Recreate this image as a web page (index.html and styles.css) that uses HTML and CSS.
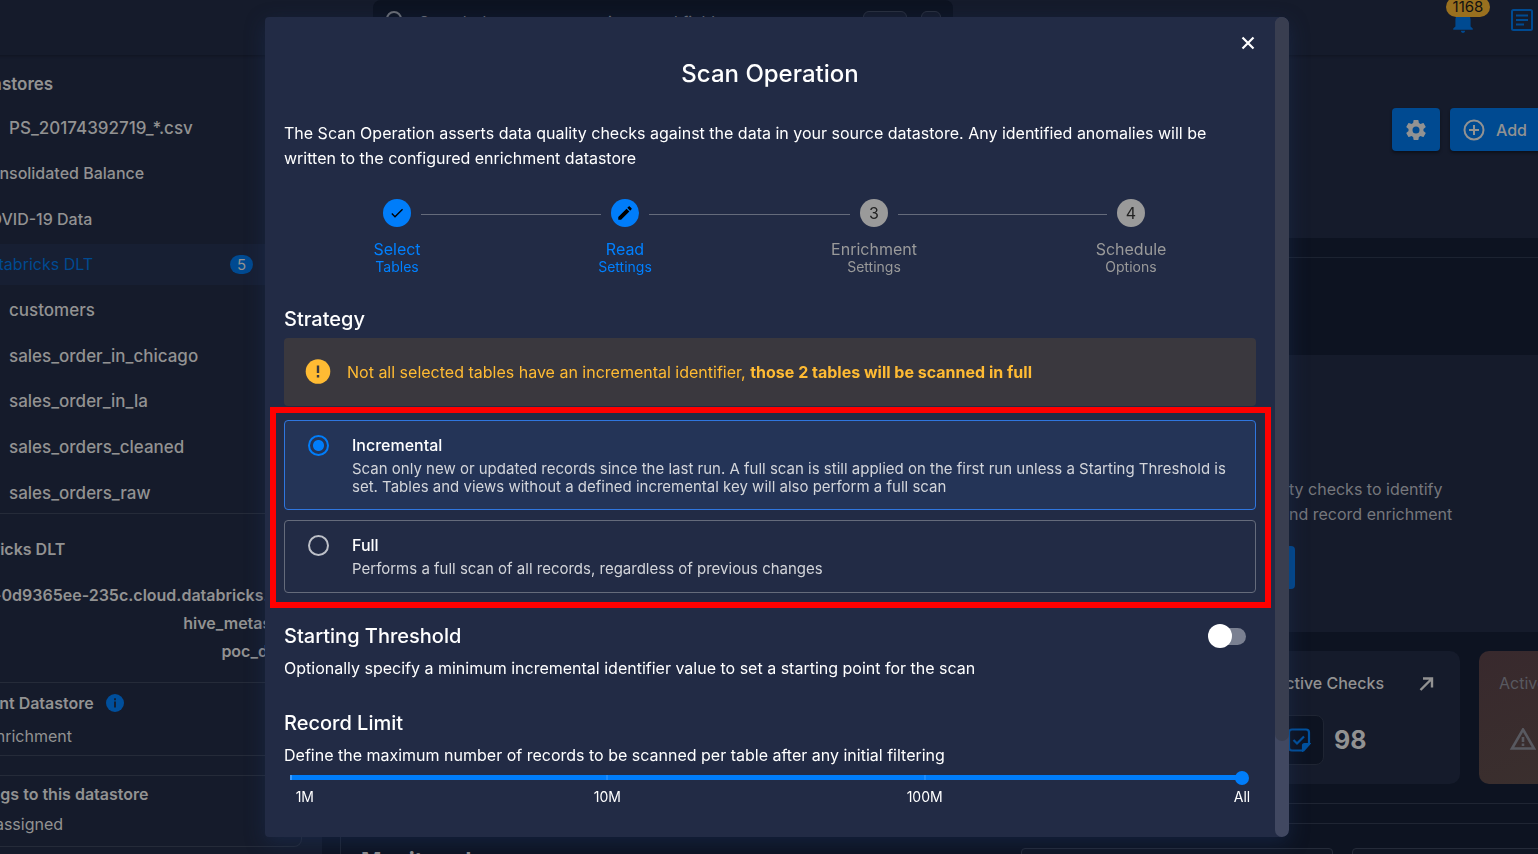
FILE: index.html
```html
<!DOCTYPE html>
<html lang="en">
<head>
<meta charset="utf-8">
<title>Scan Operation</title>
<link rel="stylesheet" href="styles.css">
</head>
<body>
<div class="shell">
  <header class="topbar">
    <div class="search">
      <svg class="search-icon" width="24" height="24" viewBox="0 0 24 24"><circle cx="9" cy="9" r="7" /><path d="M14 14l6 6" /></svg>
      <span class="search-text">Search datastores, containers and fields</span>
      <kbd class="key key-wide"></kbd><kbd class="key"></kbd>
    </div>
    <div class="top-actions">
      <button class="icon-button bell" aria-label="Notifications">
        <svg width="26" height="26" viewBox="0 0 24 24"><path d="M21 19v1H3v-1l2-2v-6c0-3.100 2.030-5.830 5-6.710V4a2 2 0 0 1 4 0v.29c2.970.88 5 3.610 5 6.710v6l2 2M14 21a2 2 0 0 1-4 0" fill="#004a91"/></svg>
        <span class="badge">1168</span>
      </button>
      <button class="icon-button" aria-label="Notes">
        <svg width="24" height="24" viewBox="0 0 24 24" fill="none" stroke="#004a91" stroke-width="2"><rect x="2" y="2" width="20" height="20" rx="1.500"/><path d="M6 7.500h12M6 12h12M6 16.500h8"/></svg>
      </button>
    </div>
  </header>
  <div class="columns">
    <aside class="sidebar">
      <h2 class="side-heading">Datastores</h2>
      <ul class="tree">
        <li class="child">PS_20174392719_*.csv</li>
        <li>Consolidated Balance</li>
        <li>COVID-19 Data</li>
        <li class="selected">Databricks DLT <span class="count">5</span></li>
        <li class="child">customers</li>
        <li class="child">sales_order_in_chicago</li>
        <li class="child">sales_order_in_la</li>
        <li class="child">sales_orders_cleaned</li>
        <li class="child">sales_orders_raw</li>
      </ul>
      <section class="connection">
        <h3>Databricks DLT</h3>
        <p>dbc-0d9365ee-235c.cloud.databricks.com</p>
        <p>hive_metastore</p>
        <p>poc_datab</p>
      </section>
      <section class="enrichment">
        <h3>Enrichment Datastore
          <svg width="18" height="18" viewBox="0 0 18 18"><circle cx="9" cy="9" r="9" fill="#004f9c"/><path d="M9 4.200v2M9 7.500v6" stroke="#151b2b" stroke-width="1.800"/></svg>
        </h3>
        <p>dlt_enrichment</p>
      </section>
      <section class="tags">
        <h3>Add tags to this datastore</h3>
        <p>None assigned</p>
      </section>
    </aside>
    <main class="main">
      <section class="hero">
        <button class="action" aria-label="Settings">
          <svg width="24" height="24" viewBox="0 0 24 24"><path d="M12 15.500A3.500 3.500 0 0 1 8.500 12 3.500 3.500 0 0 1 12 8.500a3.500 3.500 0 0 1 3.500 3.500 3.500 3.500 0 0 1-3.500 3.500m7.430-2.530c.04-.32.07-.64.07-.97s-.03-.66-.07-1l2.110-1.630c.19-.15.24-.42.12-.64l-2-3.460c-.12-.22-.39-.31-.61-.22l-2.490 1c-.52-.39-1.060-.73-1.690-.98l-.37-2.650A.506.506 0 0 0 14 2h-4c-.25 0-.46.18-.5.42l-.37 2.650c-.63.25-1.170.59-1.690.98l-2.490-1c-.22-.09-.49 0-.61.22l-2 3.460c-.13.22-.07.49.12.64L4.570 11c-.04.34-.07.67-.07 1s.03.65.07.97l-2.110 1.660c-.19.15-.25.42-.12.64l2 3.460c.12.22.39.3.61.22l2.490-1.010c.52.4 1.060.74 1.690.99l.37 2.650c.04.24.25.42.5.42h4c.25 0 .46-.18.5-.42l.37-2.650c.63-.26 1.170-.59 1.690-.99l2.490 1.010c.22.08.49 0 .61-.22l2-3.460c.12-.22.07-.49-.12-.64z" fill="#929292"/></svg>
        </button>
        <button class="action action-add">
          <svg width="24" height="24" viewBox="0 0 24 24" fill="none" stroke="#929292" stroke-width="2"><circle cx="12" cy="12" r="9.500"/><path d="M12 7v10M7 12h10"/></svg>
          Add
        </button>
      </section>
      <div class="divider-gap"></div>
      <section class="intro-panel">
        <p>ty checks to identify<br>nd record enrichment</p>
        <span class="hidden-button"></span>
      </section>
      <div class="stats">
        <article class="stat">
          <h3>Active Checks
            <svg width="16" height="16" viewBox="0 0 16 16" fill="none" stroke="#929292" stroke-width="2.400"><path d="M1.500 15L12.500 4M4 3.500H13V12.500"/></svg>
          </h3>
          <div class="stat-row">
            <span class="stat-icon"><svg width="24" height="24" viewBox="0 0 24 24" fill="none" stroke="#00529f" stroke-width="2.200"><path d="M5 1.500H19a3 3 0 0 1 3 3V16L16.500 22.500H5a3 3 0 0 1-3-3V4.500a3 3 0 0 1 3-3Z"/><path d="M6.500 12l3.500 3.500L17 8.500"/><path d="M16 22V17.500a1.500 1.500 0 0 1 1.500-1.500H22Z" fill="#00529f"/></svg></span>
            <b>98</b>
          </div>
        </article>
        <article class="stat stat-warm">
          <h3>Active Anomalies</h3>
          <div class="stat-row">
            <svg width="28" height="24" viewBox="0 0 28 24" fill="none" stroke="#585960" stroke-width="2.600"><path d="M14 1.500L25 20.500H3Z"/><path d="M14 9v5M14 15.500v2.500"/></svg>
          </div>
        </article>
      </div>
      <section class="monitored">
        <h2>Monitored</h2>
        <div class="box"></div><div class="box"></div>
      </section>
    </main>
  </div>
</div>

<div class="overlay">
  <div class="dialog" role="dialog" aria-labelledby="dialog-title">
    <form class="dialog-body">
      <button type="button" class="close" aria-label="Close"><svg width="14" height="14" viewBox="0 0 14 14"><path d="M1.500 1.500l11 11M12.500 1.500l-11 11" stroke="#fff" stroke-width="2.200"/></svg></button>
      <h1 id="dialog-title">Scan Operation</h1>
      <p class="lead">The Scan Operation asserts data quality checks against the data in your source datastore. Any identified anomalies will be written to the configured enrichment datastore</p>
      <ol class="stepper">
        <li class="step done"><span class="dot"><svg width="16" height="16" viewBox="0 0 24 24"><path d="M21 7L9 19l-5.500-5.500 1.410-1.410L9 16.170 19.590 5.590z" fill="#000"/></svg></span><span class="label">Select</span><small>Tables</small></li>
        <li class="rail" aria-hidden="true"></li>
        <li class="step done"><span class="dot"><svg width="18" height="18" viewBox="0 0 24 24"><path d="M20.710 7.040c.39-.39.39-1.040 0-1.410l-2.340-2.340c-.37-.39-1.020-.39-1.410 0l-1.840 1.830 3.750 3.750M3 17.250V21h3.750L17.810 9.930l-3.750-3.750z" fill="#000"/></svg></span><span class="label">Read</span><small>Settings</small></li>
        <li class="rail" aria-hidden="true"></li>
        <li class="step"><span class="dot">3</span><span class="label">Enrichment</span><small>Settings</small></li>
        <li class="rail" aria-hidden="true"></li>
        <li class="step"><span class="dot">4</span><span class="label">Schedule</span><small>Options</small></li>
      </ol>
      <h2>Strategy</h2>
      <div class="alert">
        <svg width="26" height="26" viewBox="0 0 26 26"><circle cx="13" cy="12.500" r="12.300" fill="#fb3"/><path d="M13 6.500v7.500M13 16v2.500" stroke="#3a383e" stroke-width="2.400"/></svg>
        <p>Not all selected tables have an incremental identifier, <b>those 2 tables will be scanned in full</b></p>
      </div>
      <div class="options">
        <div class="highlight"></div>
        <label class="option option-on">
          <input type="radio" name="strategy" checked>
          <span><strong>Incremental</strong><span class="desc">Scan only new or updated records since the last run. A full scan is still applied on the first run unless a Starting Threshold is set. Tables and views without a defined incremental key will also perform a full scan</span></span>
        </label>
        <label class="option">
          <input type="radio" name="strategy">
          <span><strong>Full</strong><span class="desc">Performs a full scan of all records, regardless of previous changes</span></span>
        </label>
      </div>
      <div class="threshold">
        <h2><label for="threshold">Starting Threshold</label></h2>
        <input id="threshold" class="switch" type="checkbox">
      </div>
      <p class="hint">Optionally specify a minimum incremental identifier value to set a starting point for the scan</p>
      <h2 class="limit-title"><label for="limit">Record Limit</label></h2>
      <p class="hint">Define the maximum number of records to be scanned per table after any initial filtering</p>
      <input id="limit" class="slider" type="range" min="0" max="3" value="3">
      <div class="ticks"><span>1M</span><span>10M</span><span>100M</span><span>All</span></div>
    </form>
    <div class="scrollbar"><div class="thumb"></div></div>
  </div>
</div>
</body>
</html>
```
FILE: styles.css
```css
* { box-sizing: border-box; }
body {
  margin: 0;
  background: #0d1321;
  color: #929292;
  font: 16px/24px Inter, "Liberation Sans", sans-serif;
}
h1, h2, h3, p, ul, ol { margin: 0; padding: 0; font-weight: 500; }
ul, ol { list-style: none; }
button { border: 0; padding: 0; background: none; font: inherit; color: inherit; }
svg { display: block; flex: none; }

/* Application behind the dialog */
.shell { display: flex; flex-direction: column; height: 100vh; margin-left: -64px; overflow: hidden; }
.topbar {
  position: relative;
  display: flex;
  flex: none;
  justify-content: space-between;
  height: 55px;
  padding-left: 437px;
  background: #151b2b;
  box-shadow: 0 1px 3px rgba(0, 0, 0, .25);
}
.search {
  display: flex;
  align-items: center;
  gap: 10px;
  width: 580px;
  height: 44px;
  padding: 0 12px;
  border-radius: 8px;
  background: #0d1321;
  color: #6b6e75;
}
.search-icon { fill: none; stroke: #6b6e75; stroke-width: 2; }
.search-text { flex: 1; }
.key { width: 20px; height: 22px; border: 1px solid #2a303e; border-radius: 6px; background: #151b2b; }
.key-wide { width: 44px; margin-right: 4px; }
.top-actions { display: flex; gap: 36px; padding: 8px 4px 0 0; height: 32px; }
.icon-button { position: relative; width: 24px; height: 24px; }
.badge {
  position: absolute;
  left: -4px;
  top: -11px;
  width: 44px;
  border-radius: 10px;
  background: #99701f;
  color: #111;
  font-size: 15px;
  line-height: 20px;
}
.columns { display: flex; flex: 1; min-height: 0; }
.sidebar { flex: none; width: 386px; overflow: hidden; background: #151b2b; font-weight: 600; }
.side-heading { padding: 17px 0 0 28px; font-size: 17px; font-weight: 600; }
.tree { display: flex; flex-direction: column; justify-content: space-between; height: 406px; margin-top: 11px; }
.tree li { display: flex; align-items: center; height: 41px; padding: 0 69px 0 42px; }
.tree .child { padding-left: 73px; font-size: 17px; }
.tree .selected { justify-content: space-between; background: #171f33; color: #004a91; font-weight: 400; }
.count {
  width: 23px;
  border-radius: 10px;
  background: #004a91;
  color: #929292;
  font-size: 15px;
  line-height: 19px;
  text-align: center;
}
.sidebar section { margin-right: 20px; border-top: 1px solid #252b39; }
.sidebar h3 { display: flex; align-items: center; gap: 12px; font-size: 16px; font-weight: 600; }
.sidebar .connection { height: 169px; padding: 21px 0 0 12px; line-height: 28px; }
.connection h3 { margin-bottom: 18px; }
.connection p { font-weight: 600; text-align: right; }
.sidebar .enrichment { height: 74px; margin-left: -10px; padding-top: 8px; border-bottom: 1px solid #252b39; }
.enrichment p { margin-top: 9px; padding-left: 34px; font-weight: 400; }
.sidebar .tags { height: 72px; margin-top: 19px; padding: 6px 0 0 14px; border-right: 1px solid #252b39; border-bottom: 1px solid #252b39; border-radius: 0 8px 8px 0; }
.tags p { margin-top: 6px; padding-left: 0; font-weight: 400; }

.main { flex: 1; min-width: 0; overflow: hidden; }
.hero { display: flex; justify-content: flex-end; align-items: flex-start; gap: 10px; height: 183px; padding-top: 53px; background: #151b2b; }
.action {
  display: flex;
  align-items: center;
  justify-content: center;
  gap: 10px;
  width: 48px;
  height: 43px;
  border-radius: 4px;
  background: #004a91;
  box-shadow: 0 2px 3px rgba(0, 0, 0, .4);
  font-weight: 500;
}
.action-add { justify-content: flex-start; width: 120px; margin-right: -32px; padding-left: 12px; }
.divider-gap { height: 98px; margin: 19px 0 0 18px; border-top: 1px solid #1c2331; }
.intro-panel { height: 277px; padding: 122px 0 0 967px; background: #151b2b; color: #75777c; line-height: 25px; }
.intro-panel p { font-weight: 400; }
.hidden-button { display: block; width: 6px; height: 43px; margin-top: 19px; border-radius: 0 4px 4px 0; background: #004a91; }
.stats { display: flex; justify-content: flex-end; gap: 19px; margin: 19px -147px 0 0; }
.stat { width: 206px; height: 133px; padding: 20px; border-radius: 10px; background: #151b2b; }
.stat h3 { display: flex; align-items: center; justify-content: space-between; padding-right: 5px; font-size: 16px; }
.stat-row { display: flex; align-items: center; gap: 10px; height: 50px; margin-top: 20px; }
.stat-row b { font-size: 25px; }
.stat-icon { display: grid; place-items: center; width: 50px; height: 50px; border: 1px solid #1f2533; border-radius: 8px; background: #0d1321; }
.stat-warm { background: linear-gradient(160deg, #38292d, #3b312e); color: #585960; }
.stat-warm .stat-row { padding-left: 10px; }
.stat-warm h3 { white-space: nowrap; font-weight: 400; }
.monitored {
  position: relative;
  display: grid;
  grid-template-columns: 1fr 312px 312px;
  gap: 19px;
  height: 90px;
  margin: 39px -127px 0 18px;
  padding: 24px 0 0 20px;
  border: 1px solid #1f2533;
}
.monitored::before { content: ""; position: absolute; top: -21px; left: 0; right: 0; border-top: 1px solid #1f2533; }
.monitored h2 { font-size: 22px; line-height: 24px; font-weight: 700; }
.box { border: 1px solid #252b39; border-radius: 4px; background: #101624; }

/* Dialog */
.overlay { position: fixed; inset: 0; display: flex; align-items: center; justify-content: center; padding-left: 16px; }
.dialog {
  display: flex;
  width: 1024px;
  max-width: 96%;
  height: 96%;
  overflow: hidden;
  border-radius: 4px 7px 7px 4px;
  background: #222b45;
  box-shadow: 0 6px 20px rgba(28, 52, 96, .45);
  color: #fff;
}
.dialog-body { position: relative; flex: 1; padding: 41px 19px 0; }
.scrollbar { width: 14px; border-radius: 7px; background: #414861; }
.thumb { height: 88.300%; border-radius: 7px; background: #393e50; }
.close { position: absolute; top: 19px; right: 20px; }
h1 { font-size: 24px; line-height: 32px; text-align: center; }
.lead { margin-top: 31px; font-weight: 400; line-height: 25px; }
.stepper {
  display: grid;
  grid-template-columns: 48px 180fr 48px 201fr 48px 209fr 48px;
  margin-top: 28px;
  padding: 0 101px 0 89px;
}
.step { display: flex; flex-direction: column; align-items: center; color: #9a9a9a; line-height: 18px; font-weight: 400; }
.step small { font-size: 14px; }
.dot { display: grid; place-items: center; width: 28px; height: 28px; margin-bottom: 13px; border-radius: 50%; background: #9a9a9a; color: #222; }
.done { color: #0080ff; }
.done .dot { background: #007dfa; }
.rail { height: 16px; border-bottom: 1px solid #656b7b; }
.dialog h2 { font-size: 20px; line-height: 28px; }
.stepper + h2 { margin-top: 29px; }
.alert { display: flex; align-items: center; gap: 16px; height: 68px; margin-top: 5px; padding: 0 21px; border-radius: 4px; background: #3a383e; color: #fb3; }
.alert p { font-weight: 400; }
.options { position: relative; display: grid; gap: 10px; margin-top: 14px; }
.highlight { position: absolute; inset: -13px -15px -15px -14px; border: 6px solid #f00; pointer-events: none; }
.option { display: flex; gap: 23px; min-height: 73px; padding: 12px 22px 13px 23px; border: 1px solid #656b7b; border-radius: 4px; }
.option-on { border-color: #2f76df; background: #243457; }
.option input { appearance: none; flex: none; width: 21px; height: 21px; margin: 2px 0 0; border: 2px solid #bdc0c8; border-radius: 50%; }
.option input:checked { border-color: #007dfa; background: radial-gradient(#007dfa 5px, transparent 6px); }
.option strong { display: block; font-weight: 500; }
.desc { display: block; margin-top: 3px; color: #d3d5da; font-size: 15px; line-height: 18px; }
.threshold { display: flex; justify-content: space-between; align-items: center; margin-top: 29px; padding-right: 10px; }
.switch { appearance: none; position: relative; width: 38px; height: 24px; margin: 0; }
.switch::before { content: ""; position: absolute; inset: 4px 0 3px 6px; border-radius: 9px; background: #7a8091; }
.switch::after { content: ""; position: absolute; left: 0; top: 0; width: 24px; height: 24px; border-radius: 50%; background: #fff; }
.hint { margin-top: 6px; font-weight: 400; line-height: 25px; }
.dialog .limit-title { margin-top: 28px; }
.slider { appearance: none; display: block; width: calc(100% - 7px); height: 14px; margin: 3px 0 0; background: linear-gradient(90deg, #3c9bff 2px, #007dfa 2px, #007dfa calc(33.300% - 1px), #3c9bff 33.300%, #007dfa calc(33.300% + 1px), #007dfa calc(66.700% - 1px), #3c9bff 66.700%, #007dfa calc(66.700% + 1px)) 6px 4px / calc(100% - 13px) 5px no-repeat; }
.slider::-webkit-slider-thumb { appearance: none; width: 14px; height: 14px; border-radius: 50%; background: #007dfa; }
.ticks { display: flex; justify-content: space-between; margin: 3px -10px 0 -18px; font-size: 14px; line-height: 18px; }
.ticks span { width: 48px; text-align: center; }
.ticks span:first-child { text-align: right; }
```
